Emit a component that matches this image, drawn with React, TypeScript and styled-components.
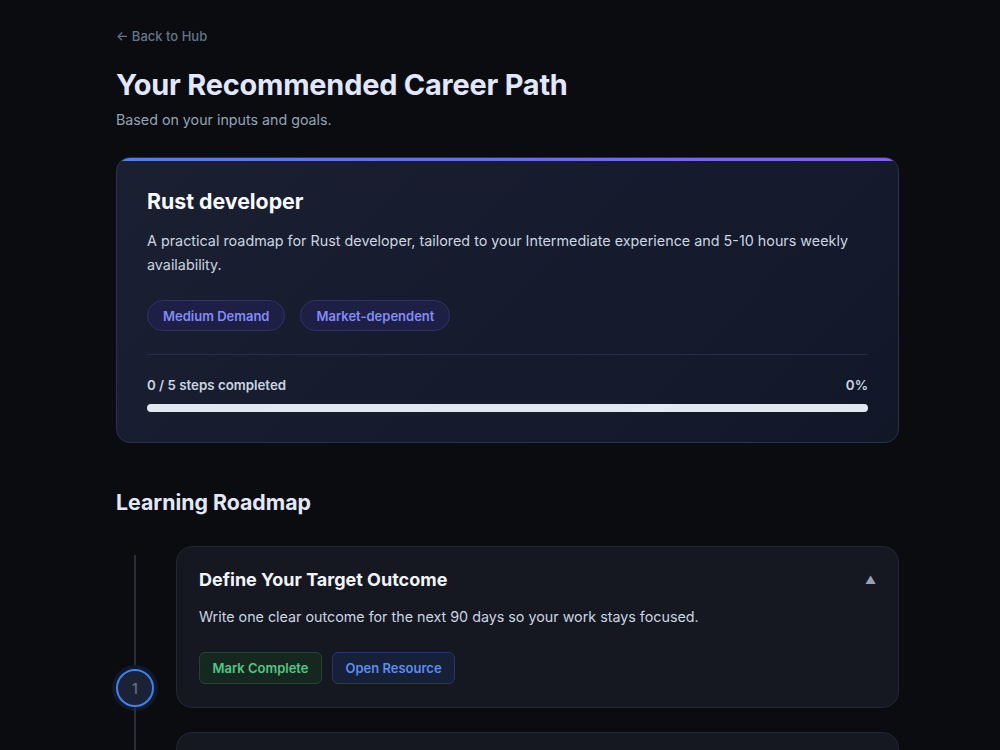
import React from "react";
import styled, { createGlobalStyle } from "styled-components";

const GlobalStyle = createGlobalStyle`
  html, body {
    margin: 0;
    padding: 0;
    background: #0b0c10;
    font-family: Inter, "Noto Sans", "Liberation Sans", sans-serif;
    -webkit-font-smoothing: antialiased;
  }
  * { box-sizing: border-box; }
`;

const Page = styled.div`
  min-height: 750px;
  background: #0b0c10;
  padding: 28px 101px 40px 116px;
`;

const BackLink = styled.a`
  display: flex;
  width: fit-content;
  align-items: center;
  gap: 4px;
  font-size: 13px;
  line-height: 16px;
  font-weight: 500;
  color: #64748b;
  text-decoration: none;
`;

const Title = styled.h1`
  margin: 23px 0 0;
  font-size: 28.9px;
  line-height: 36px;
  font-weight: 700;
  color: #e0e7ff;
  letter-spacing: -0.2px;
`;

const Subtitle = styled.p`
  margin: 7px 0 0;
  font-size: 14.25px;
  line-height: 20px;
  color: #94a3b8;
`;

const HeroCard = styled.section`
  position: relative;
  margin-top: 27px;
  border: 1px solid #283150;
  border-radius: 14px;
  overflow: hidden;
  background: linear-gradient(135deg, #1a2030 0%, #151b2d 60%, #121728 100%);
  padding: 29px 30px 30px 30px;

  &::before {
    content: "";
    position: absolute;
    top: 0;
    left: 0;
    right: 0;
    height: 3px;
    background: linear-gradient(90deg, #4f80ea 0%, #6a6cf0 55%, #8b5cf6 100%);
  }
`;

const CareerName = styled.h2`
  margin: 0;
  font-size: 21.3px;
  line-height: 28px;
  font-weight: 700;
  color: #f8fafc;
`;

const CareerDesc = styled.p`
  margin: 14px 0 0;
  font-size: 14.35px;
  line-height: 24px;
  color: #cbd5e1;
`;

const BadgeRow = styled.div`
  display: flex;
  gap: 15px;
  margin-top: 23px;
`;

const Badge = styled.span`
  display: inline-flex;
  align-items: center;
  height: 31px;
  padding: 0 15px;
  border-radius: 16px;
  background: #1d1f44;
  border: 1px solid #2e3268;
  color: #818cf8;
  font-size: 13px;
  font-weight: 600;
`;

const Divider = styled.hr`
  margin: 23px 0 0;
  border: none;
  height: 1px;
  background: #262e45;
`;

const ProgressHead = styled.div`
  display: flex;
  justify-content: space-between;
  margin-top: 21px;
  font-size: 13.3px;
  line-height: 18px;
  font-weight: 600;
  color: #cbd5e1;
`;

const Track = styled.div`
  margin-top: 10px;
  height: 8px;
  border-radius: 4px;
  background: #e2e8f0;
  overflow: hidden;
`;

const Fill = styled.div`
  height: 100%;
  background: #6366f1;
`;

const SectionTitle = styled.h2`
  margin: 44px 0 0;
  font-size: 21.3px;
  line-height: 30px;
  font-weight: 700;
  color: #e2e8f8;
`;

const Timeline = styled.div`
  display: flex;
  flex-direction: column;
  gap: 24px;
  margin-top: 29px;
`;

const StepRow = styled.div`
  display: flex;
`;

const Rail = styled.div<{ $first?: boolean }>`
  position: relative;
  width: 60px;
  flex: none;
  display: flex;
  flex-direction: column;
  justify-content: flex-end;
  padding-bottom: 1px;

  &::before {
    content: "";
    position: absolute;
    left: 18px;
    width: 2px;
    top: ${(p) => (p.$first ? "9px" : "-24px")};
    bottom: -24px;
    background: #2a2e37;
  }
`;

const StepCircle = styled.div<{ $active?: boolean }>`
  position: relative;
  width: 38px;
  height: 38px;
  border-radius: 50%;
  border: 2px solid ${(p) => (p.$active ? "#3b82f6" : "#334155")};
  background: #1b2233;
  box-shadow: 0 0 0 4px #111827;
  display: flex;
  align-items: center;
  justify-content: center;
  font-size: 14px;
  color: #64748b;
  font-weight: 500;
`;

const StepCard = styled.div`
  flex: 1;
  border: 1px solid #222734;
  border-radius: 16px;
  background: #151821;
  padding: 20px 22px 23px 22px;
  min-height: 120px;
`;

const StepHead = styled.div`
  display: flex;
  justify-content: space-between;
  align-items: center;
`;

const StepTitle = styled.h3`
  margin: 0;
  font-size: 18px;
  line-height: 26px;
  font-weight: 700;
  color: #f1f5f9;
`;

const Caret = styled.span`
  font-size: 11px;
  color: #94a3b8;
`;

const StepDesc = styled.p`
  margin: 12px 0 0;
  font-size: 14.3px;
  line-height: 24px;
  color: #cbd5e1;
`;

const ActionRow = styled.div`
  display: flex;
  gap: 10px;
  margin-top: 23px;
`;

const ActionButton = styled.button<{ $tone: "green" | "blue" }>`
  height: 32px;
  width: 123px;
  padding: 0;
  border-radius: 6px;
  font-family: inherit;
  font-size: 13px;
  font-weight: 600;
  cursor: pointer;
  background: ${(p) => (p.$tone === "green" ? "#16271f" : "#162038")};
  border: 1px solid ${(p) => (p.$tone === "green" ? "#24452f" : "#243866")};
  color: ${(p) => (p.$tone === "green" ? "#4ec983" : "#5b8ef0")};
`;

export default function App() {
  const progress = 0;
  return (
    <>
      <GlobalStyle />
      <Page>
        <BackLink href="#">← Back to Hub</BackLink>
        <Title>Your Recommended Career Path</Title>
        <Subtitle>Based on your inputs and goals.</Subtitle>

        <HeroCard>
          <CareerName>Rust developer</CareerName>
          <CareerDesc>
            A practical roadmap for Rust developer, tailored to your Intermediate experience and 5-10 hours weekly
            availability.
          </CareerDesc>
          <BadgeRow>
            <Badge>Medium Demand</Badge>
            <Badge>Market-dependent</Badge>
          </BadgeRow>
          <Divider />
          <ProgressHead>
            <span>0 / 5 steps completed</span>
            <span>0%</span>
          </ProgressHead>
          <Track>
            <Fill style={{ width: `${progress}%` }} />
          </Track>
        </HeroCard>

        <SectionTitle>Learning Roadmap</SectionTitle>

        <Timeline>
          <StepRow>
            <Rail $first>
              <StepCircle $active>1</StepCircle>
            </Rail>
            <StepCard>
              <StepHead>
                <StepTitle>Define Your Target Outcome</StepTitle>
                <Caret>▲</Caret>
              </StepHead>
              <StepDesc>Write one clear outcome for the next 90 days so your work stays focused.</StepDesc>
              <ActionRow>
                <ActionButton $tone="green">Mark Complete</ActionButton>
                <ActionButton $tone="blue">Open Resource</ActionButton>
              </ActionRow>
            </StepCard>
          </StepRow>
          <StepRow>
            <Rail>
              <StepCircle>2</StepCircle>
            </Rail>
            <StepCard>
              <StepHead>
                <StepTitle>Build Core Rust Fundamentals</StepTitle>
                <Caret>▼</Caret>
              </StepHead>
            </StepCard>
          </StepRow>
        </Timeline>
      </Page>
    </>
  );
}
